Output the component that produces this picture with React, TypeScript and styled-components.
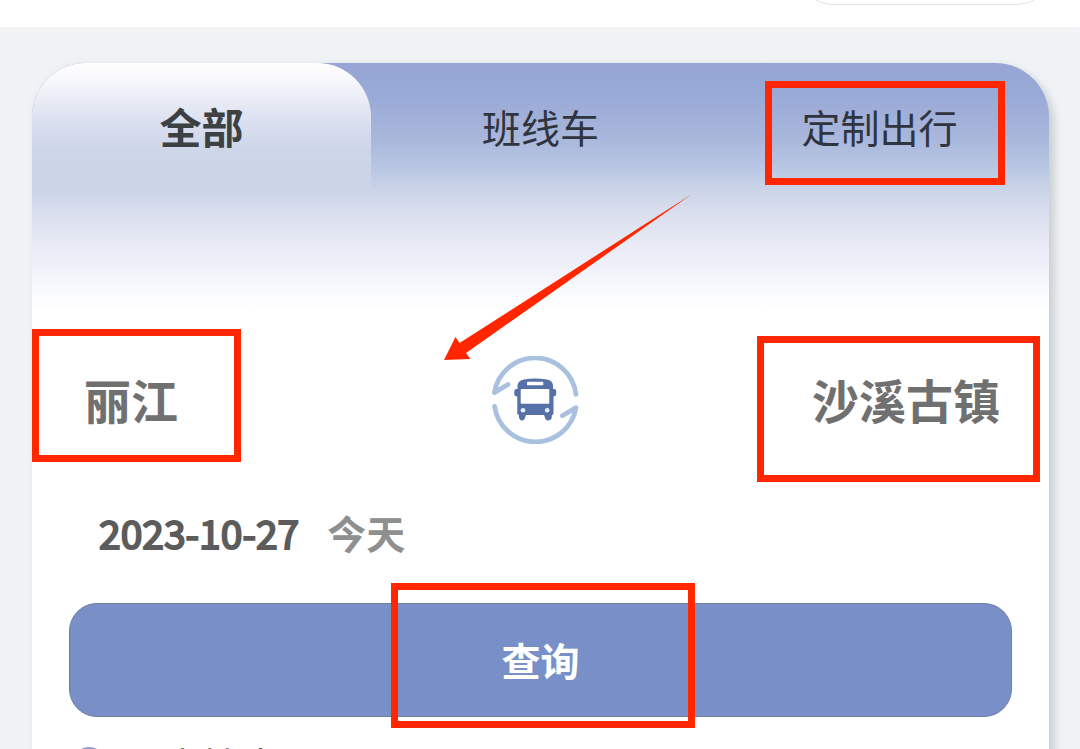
import React from "react";
import styled, { createGlobalStyle, css } from "styled-components";

const GlobalStyle = createGlobalStyle`
  * {
    box-sizing: border-box;
  }
  body {
    margin: 0;
    background: #eff3f6;
    font-family: "Noto Sans CJK SC", sans-serif;
  }
  button {
    margin: 0;
    padding: 0;
    border: 0;
    background: none;
    color: inherit;
    font: inherit;
    cursor: pointer;
  }
`;

const Page = styled.div`
  height: 100vh;
  overflow: hidden;
`;

const Header = styled.header`
  display: flex;
  align-items: flex-end;
  justify-content: flex-end;
  height: 27px;
  padding: 0 24px 22px;
  overflow: hidden;
  background: #fff;
`;

const Capsule = styled.div`
  flex: none;
  width: 262px;
  height: 80px;
  border: 1px solid #e4e4e4;
  border-radius: 40px;
`;

const Main = styled.main`
  padding: 36px 31px 0 32px;
  background: linear-gradient(#f2f3f5, #eff3f6 14px);
`;

const Card = styled.section`
  position: relative;
  padding-bottom: 40px;
  border-radius: 54px 54px 0 0;
  background: linear-gradient(
      #96a5d4 0,
      #9aaad7 34px,
      #a9b7db 76px,
      #b6c4e3 100px,
      #ccd5e8 128px,
      #dbe0ef 152px,
      #e6e9f4 176px,
      #eff1fa 204px,
      #f9fafd 228px,
      #fff 250px
    )
    #fff;
  box-shadow: 6px 6px 8px rgba(0, 0, 0, 0.13), 0 0 8px rgba(0, 0, 0, 0.04);
`;

const Tabs = styled.nav`
  display: grid;
  grid-template-columns: repeat(3, 1fr);
`;

const Tab = styled.button<{ $active?: boolean }>`
  position: relative;
  height: 130px;
  padding-bottom: 4px;
  color: #30343f;
  font-size: 39px;
  line-height: 58px;
  ${(p) =>
    p.$active &&
    css`
      border-radius: 54px 54px 0 0;
      background: linear-gradient(
        #fff 0,
        #f5f6fb 20px,
        #e6e9f4 42px,
        #d9def0 62px,
        #cdd5e8 88px,
        #ccd4e8 130px
      );
      color: #3c4144;
      font-size: 42px;
      font-weight: 700;
    `}
`;

const Route = styled.div`
  display: grid;
  grid-template-columns: 1fr auto 1fr;
  align-items: center;
  margin-top: 163px;
  padding: 0 49px 0 52px;
`;

const City = styled.button<{ $end?: boolean }>`
  position: relative;
  justify-self: ${(p) => (p.$end ? "end" : "start")};
  padding-bottom: 2px;
  color: #707070;
  font-size: 47px;
  font-weight: 700;
  line-height: 68px;
`;

const Swap = styled.button`
  display: block;
  width: 88px;
  height: 88px;
  margin-right: 14px;
`;

const DateRow = styled.button`
  display: flex;
  align-items: center;
  gap: 28px;
  margin: 59px 0 0 67px;
  line-height: 58px;
`;

const DateText = styled.time`
  color: #5c5c5c;
  font-size: 39px;
  -webkit-text-stroke: 2px #5c5c5c;
`;

const DayText = styled.span`
  color: #8f8f8f;
  font-size: 39px;
  font-weight: 700;
`;

const SearchWrap = styled.div`
  display: flex;
  margin: 42px 37px 0;
`;

const Search = styled.button`
  position: relative;
  flex: 1;
  height: 114px;
  padding-bottom: 2px;
  border: 1px solid #6f7f9f;
  border-radius: 28px;
  background: #7890c7;
  color: #fff;
  font-size: 39px;
  font-weight: 700;
`;

const History = styled.div`
  display: flex;
  align-items: center;
  gap: 18px;
  margin: 18px 0 0 40px;
  color: #555;
  font-size: 39px;
  line-height: 58px;
`;

const Mark = styled.span<{ $inset: string }>`
  position: absolute;
  inset: ${(p) => p.$inset};
  border: 7px solid #ff2600;
  pointer-events: none;
`;

const Arrow = styled.svg`
  position: absolute;
  top: 131px;
  left: 412px;
  pointer-events: none;
`;

const SwapIcon = () => (
  <svg width="88" height="88" viewBox="0 0 88 88" fill="none" aria-hidden="true">
    <g stroke="#a9c0df" strokeWidth="4.8" strokeLinecap="round" strokeLinejoin="round">
      <path d="M17 28.5 3.4 36.6A41.2 41.2 0 0 1 85 38.4" />
      <path d="M3.6 50.4A41.2 41.2 0 0 0 85 51.6L71.4 59.8" />
    </g>
    <path
      fill="#5670a8"
      fillRule="evenodd"
      d="M33 23.4Q44 21.4 56 23.4 61.6 24.3 62 29.5V33H63Q65.2 33 65.2 35V38.2Q65.2 40.2 62.5 40.6V57.5Q62.5 58.8 60.8 59V61.5Q60 64.4 57 64.4 54.4 64.4 54 61.5L53 59H35L34 61.5Q33.6 64.4 31 64.4 28.6 64.4 28 61.5V59Q26.3 58.8 26.3 57.5V40.6Q23.3 40.2 23.3 38.2V35Q23.3 33 25.5 33H26.5V29.5Q27 24.3 33 23.4ZM37 25.7Q36 25.7 36 26.7V28.4Q36 29.3 37 29.3H51.3Q52.3 29.3 52.3 28.4V26.7Q52.3 25.7 51.3 25.7ZM30.7 33Q29.7 33 29.7 34V46.7Q29.7 47.7 30.7 47.7H57.3Q58.3 47.7 58.3 46.7V34Q58.3 33 57.3 33Z"
    />
    <circle cx="32" cy="54.3" r="2.3" fill="#e4f4ff" />
    <circle cx="56.2" cy="54.3" r="2.3" fill="#e4f4ff" />
  </svg>
);

const ClockIcon = () => (
  <svg width="34" height="34" viewBox="0 0 34 34" fill="none" stroke="#8d9cc8" strokeWidth="3" aria-hidden="true">
    <circle cx="17" cy="17" r="15.5" />
    <path d="M17 8v10l6 4" strokeLinecap="round" />
  </svg>
);

export default function App() {
  return (
    <Page>
      <GlobalStyle />
      <Header>
        <Capsule />
      </Header>
      <Main>
        <Card>
          <Tabs>
            <Tab type="button" $active>
              全部
            </Tab>
            <Tab type="button">班线车</Tab>
            <Tab type="button">
              定制出行
              <Mark $inset="18px 44px 8px 55px" />
            </Tab>
          </Tabs>
          <Route>
            <City type="button">
              丽江
              <Mark $inset="-36px -63px -27px -52px" />
            </City>
            <Swap type="button" aria-label="交换">
              <SwapIcon />
            </Swap>
            <City type="button" $end>
              沙溪古镇
              <Mark $inset="-29px -40px -47px -55px" />
            </City>
          </Route>
          <DateRow type="button">
            <DateText dateTime="2023-10-27">2023-10-27</DateText>
            <DayText>今天</DayText>
          </DateRow>
          <SearchWrap>
            <Search type="button">
              查询
              <Mark $inset="-21px 316px -12px 321px" />
            </Search>
          </SearchWrap>
          <History>
            <ClockIcon />
            <span>历史搜索</span>
          </History>
          <Arrow width="250" height="168" viewBox="0 0 250 168" aria-hidden="true">
            <path d="M0 166 11.5 143 15.5 149 248 0 22 159 26.5 165Z" fill="#ff2600" />
          </Arrow>
        </Card>
      </Main>
    </Page>
  );
}
